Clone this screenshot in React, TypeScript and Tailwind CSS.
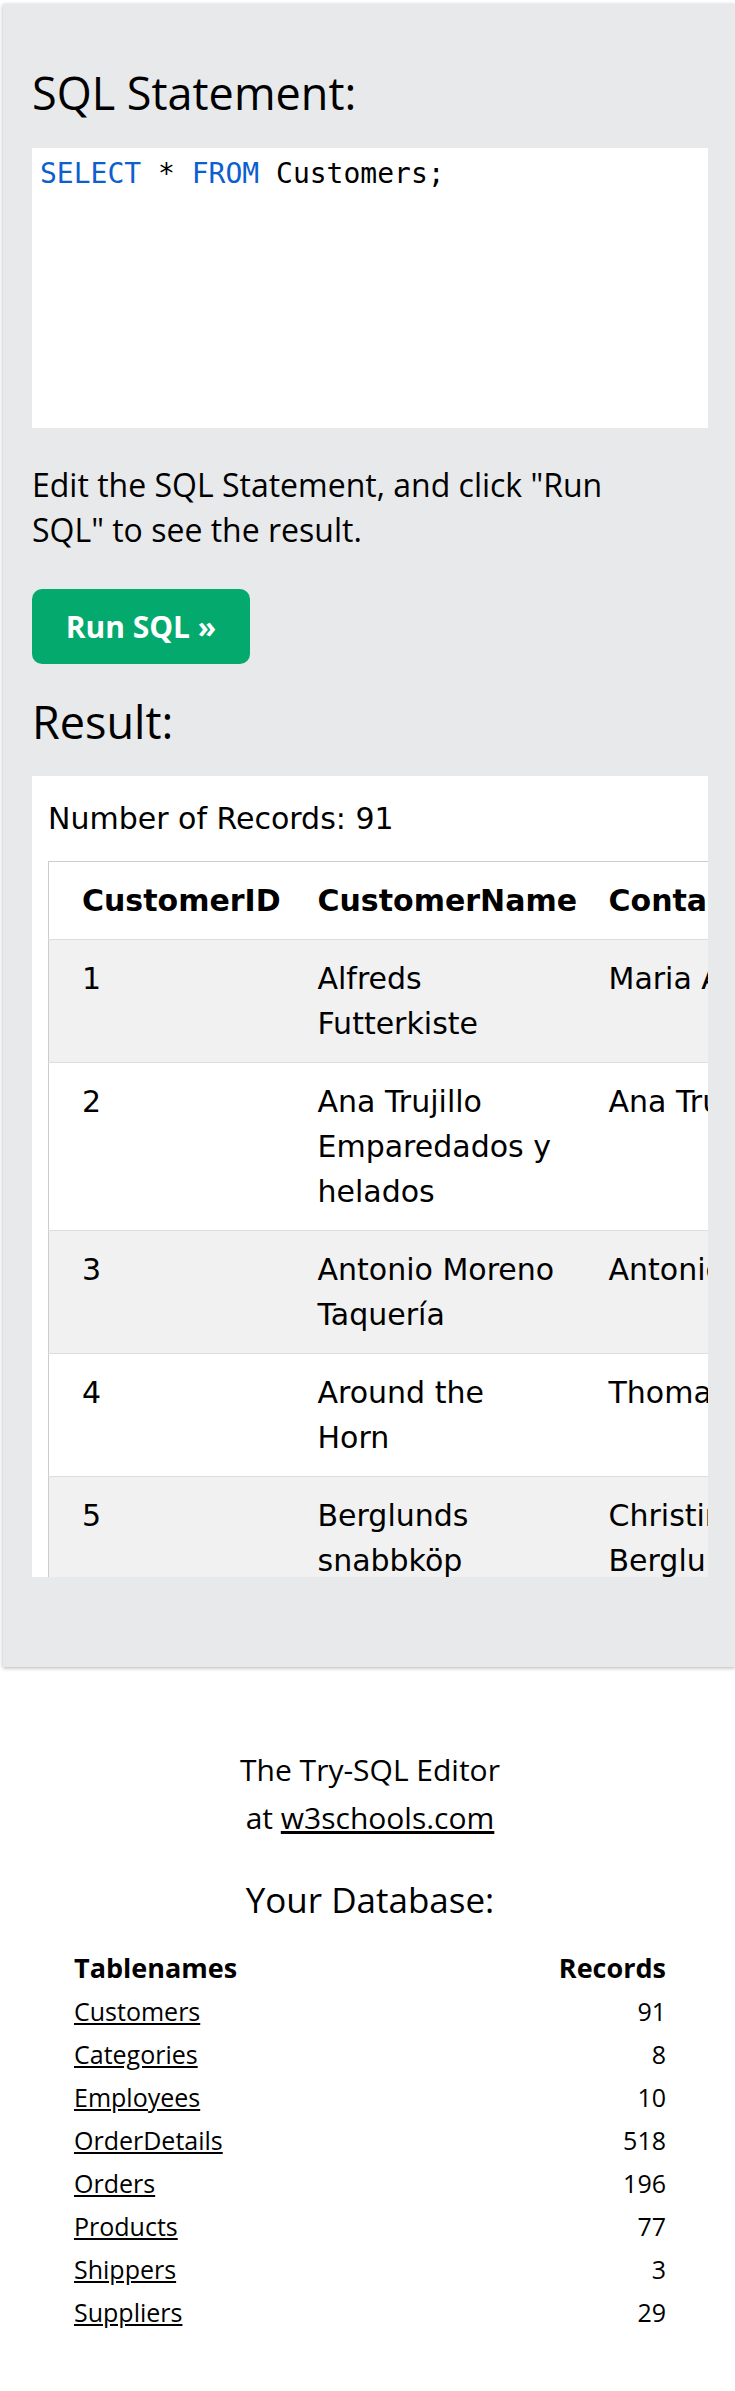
import React from 'react';

const customers = [
  { id: 1, name: 'Alfreds Futterkiste', contact: 'Maria Anders', address: 'Obere Str. 57', city: 'Berlin', postal: '12209', country: 'Germany' },
  { id: 2, name: 'Ana Trujillo Emparedados y helados', contact: 'Ana Trujillo', address: 'Avda. de la Constitución 2222', city: 'México D.F.', postal: '05021', country: 'Mexico' },
  { id: 3, name: 'Antonio Moreno Taquería', contact: 'Antonio Moreno', address: 'Mataderos 2312', city: 'México D.F.', postal: '05023', country: 'Mexico' },
  { id: 4, name: 'Around the Horn', contact: 'Thomas Hardy', address: '120 Hanover Sq.', city: 'London', postal: 'WA1 1DP', country: 'UK' },
  { id: 5, name: 'Berglunds snabbköp', contact: 'Christina Berglund', address: 'Berguvsvägen 8', city: 'Luleå', postal: 'S-958 22', country: 'Sweden' },
  { id: 6, name: 'Blauer See Delikatessen', contact: 'Hanna Moos', address: 'Forsterstr. 57', city: 'Mannheim', postal: '68306', country: 'Germany' },
];

const tables = [
  { name: 'Customers', records: 91 },
  { name: 'Categories', records: 8 },
  { name: 'Employees', records: 10 },
  { name: 'OrderDetails', records: 518 },
  { name: 'Orders', records: 196 },
  { name: 'Products', records: 77 },
  { name: 'Shippers', records: 3 },
  { name: 'Suppliers', records: 29 },
];

function ResultTable() {
  return (
    <table className="mt-[20px] w-[1754px] table-fixed border-collapse border border-[#cccccc] text-left text-[30px] leading-[45px] text-black">
      <thead>
        <tr className="border-b border-[#dddddd] bg-white">
          <th className="w-[253px] pl-[33px] pr-[16px] py-[16px] font-bold">CustomerID</th>
          <th className="w-[291px] px-[16px] py-[16px] font-bold">CustomerName</th>
          <th className="w-[310px] px-[16px] py-[16px] font-bold">ContactName</th>
          <th className="w-[300px] px-[16px] py-[16px] font-bold">Address</th>
          <th className="w-[200px] px-[16px] py-[16px] font-bold">City</th>
          <th className="w-[220px] px-[16px] py-[16px] font-bold">PostalCode</th>
          <th className="w-[180px] px-[16px] py-[16px] font-bold">Country</th>
        </tr>
      </thead>
      <tbody>
        {customers.map((c) => (
          <tr key={c.id} className="border-b border-[#dddddd] bg-white odd:bg-[#f1f1f1]">
            <td className="pl-[33px] pr-[16px] py-[16px] align-top">{c.id}</td>
            <td className="px-[16px] py-[16px] align-top">
              <div className="max-w-[245px]">{c.name}</div>
            </td>
            <td className="px-[16px] py-[16px] align-top">
              <div className="max-w-[275px]">{c.contact}</div>
            </td>
            <td className="px-[16px] py-[16px] align-top">{c.address}</td>
            <td className="px-[16px] py-[16px] align-top">{c.city}</td>
            <td className="px-[16px] py-[16px] align-top">{c.postal}</td>
            <td className="px-[16px] py-[16px] align-top">{c.country}</td>
          </tr>
        ))}
      </tbody>
    </table>
  );
}

export default function App() {
  return (
    <div className="min-h-screen overflow-hidden bg-white text-black">
      {/* editor panel */}
      <div className="ml-[3px] mt-[4px] w-[732px] bg-[#e7e9eb] pl-[29px] pt-[61px] pb-[90px] shadow-[0_1px_4px_rgba(0,0,0,0.3)] font-['Open_Sans',sans-serif]">
        <h3 className="text-[45px] leading-[56px] font-normal">SQL Statement:</h3>

        <div className="mt-[27px] h-[280px] w-[676px] bg-white pl-[8px] pt-[5px] font-['DejaVu_Sans_Mono',monospace] text-[28px] leading-[42px] whitespace-pre">
          <span className="text-[#0c60cd]">SELECT</span> * <span className="text-[#0c60cd]">FROM</span> Customers;
        </div>

        <p className="mt-[34px] max-w-[610px] text-[32px] leading-[45px]">
          Edit the SQL Statement, and click "Run SQL" to see the result.
        </p>

        <button className="mt-[37px] block h-[75px] w-[218px] rounded-[10px] bg-[#04aa6d] text-[30px] font-bold text-white">
          Run SQL »
        </button>

        <h3 className="mt-[30px] text-[45px] leading-[56px] font-normal">Result:</h3>

        <div className="mt-[26px] h-[801px] w-[676px] overflow-hidden bg-white pl-[16px] pt-[20px] font-['DejaVu_Sans',sans-serif]">
          <p className="text-[30px] leading-[45px]">Number of Records: 91</p>
          <ResultTable />
        </div>
      </div>

      {/* footer */}
      <div className="pl-[5px] pt-[79px] pb-[57px] text-center font-['Open_Sans',sans-serif]">
        <p className="text-[30px] leading-[48px]">
          The Try-SQL Editor
          <br />
          at <a href="#" className="underline">w3schools.com</a>
        </p>
        <h3 className="mt-[32px] text-[35px] leading-[51px] font-normal">Your Database:</h3>
        <table className="mx-auto mt-[20px] w-[592px] text-[25px]">
          <thead>
            <tr className="leading-[45px] text-[27px]">
              <th className="text-left font-bold">Tablenames</th>
              <th className="text-right font-bold">Records</th>
            </tr>
          </thead>
          <tbody>
            {tables.map((t) => (
              <tr key={t.name} className="leading-[43px]">
                <td className="text-left">
                  <a href="#" className="underline">{t.name}</a>
                </td>
                <td className="text-right">{t.records}</td>
              </tr>
            ))}
          </tbody>
        </table>
      </div>
    </div>
  );
}
